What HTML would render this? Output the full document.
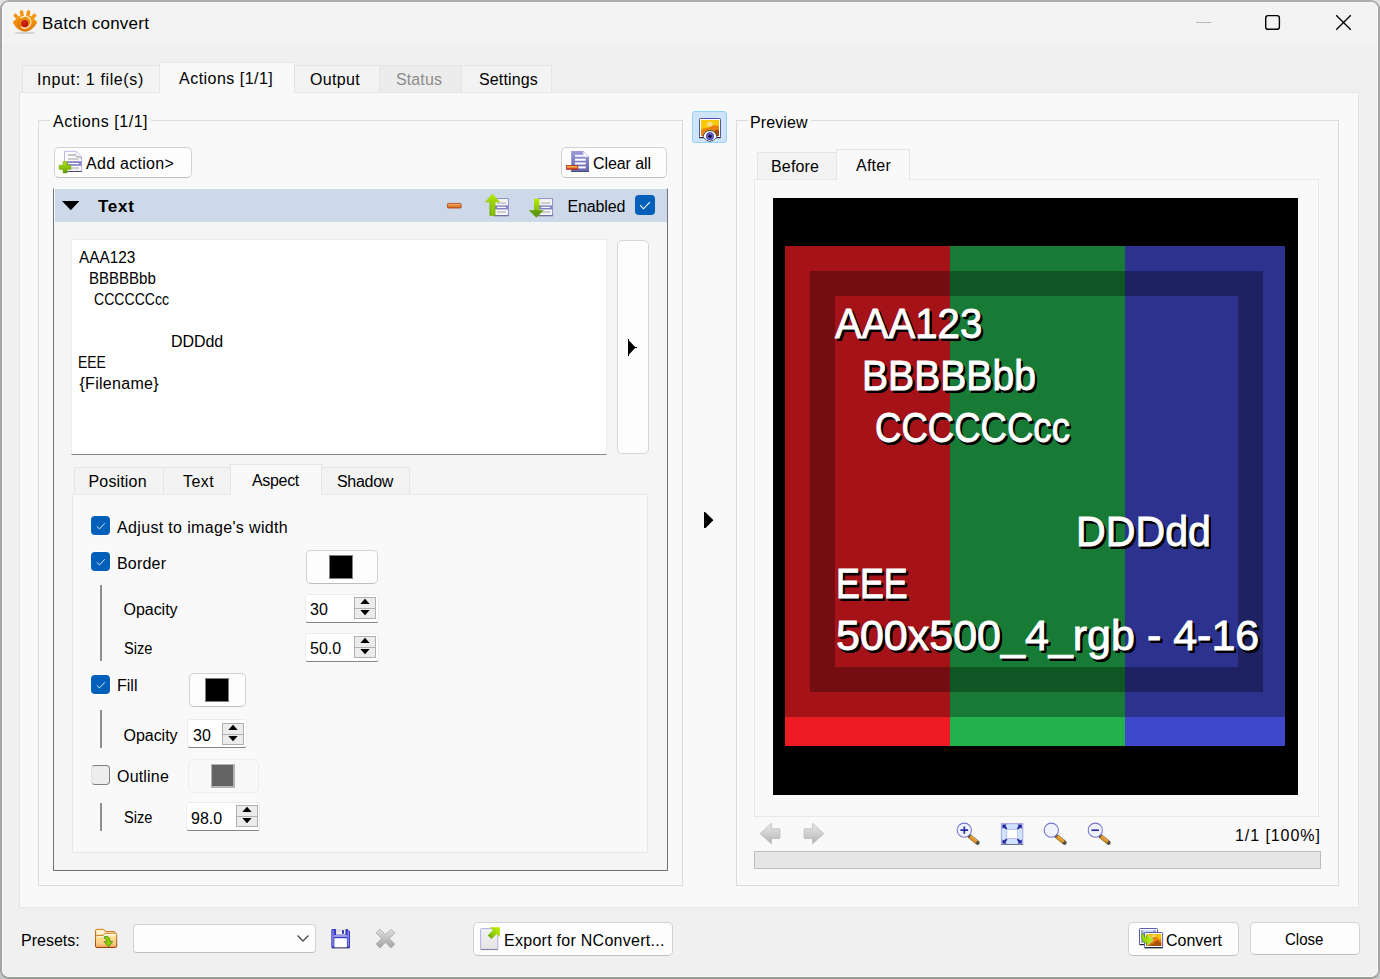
<!DOCTYPE html>
<html>
<head>
<meta charset="utf-8">
<title>Batch convert</title>
<style>
*{box-sizing:border-box;margin:0;padding:0}
html,body{width:1380px;height:979px;overflow:hidden;background:linear-gradient(#e3e2e1 0,#e3e2e1 50%,#c5c7c7 50%,#c5c7c7 100%)}
body{font-family:"Liberation Sans",sans-serif;font-size:16px;color:#000;position:relative}
.abs,.t,.box,.btn,.tab,.cb,.spin,.vl,svg{position:absolute}
.t{transform-origin:0 0;white-space:pre;line-height:20px;height:20px}
#win{position:absolute;left:0;top:0;width:1380px;height:979px;background:#f0f0f0;border:2px solid;border-color:#adadad #a6a6a6 #9b9d98 #a3a3a3;border-radius:9px;overflow:hidden}
#hl{position:absolute;left:2px;top:2px;width:1376px;height:975px;border:1px solid #f7f7f7;border-radius:7px;pointer-events:none}
#titlebar{position:absolute;left:0;top:0;width:1380px;height:45px;background:#f3f3f3}
.pane{position:absolute;background:#f9f9f9;border:1px solid #e5e5e5}
.tab{background:#f3f3f3;border:1px solid #e5e5e5;border-bottom:none}
.tab.sel{background:#f9f9f9}
.grp{position:absolute;border:1px solid #dcdcdc}
.grplabel{position:absolute;background:#f9f9f9;line-height:20px;height:20px;white-space:pre}
.btn{background:#fdfdfd;border:1px solid #d2d2d2;border-bottom-color:#bebebe;border-radius:5px}
.cb{width:19px;height:19px;border-radius:4px;background:#0060b9;box-shadow:0 0 0 1px rgba(255,255,255,0.75)}
.cb svg{left:0;top:0}
.cb.off{background:#ededed;border:1px solid #808080;border-left-color:#e0e0e0;box-shadow:none}
.spin{background:#fff;border:1px solid #ececec;border-bottom:1px solid #868686;border-radius:3px}
.sb{position:absolute;width:22px;height:22px;background:#ececec;border:1px solid #b0b0b0}
.sb:before{content:"";position:absolute;left:0;top:10px;width:20px;height:1px;background:#b0b0b0}
.sb svg{left:5px;top:0px}
.pt{transform-origin:0 0;position:absolute;white-space:pre;font-size:42.5px;line-height:50px;height:50px;margin-top:-40px;color:#fff;text-shadow:2px 2px 0 #000,2.7px 2.7px 0 #000,1.6px 2.7px 0 #000,2.7px 1.6px 0 #000;-webkit-text-stroke:0.9px #fff}
.vl{width:2px;background:#8f8f8f}
</style>
</head>
<body>
<div id="win"><div id="c" style="position:absolute;left:-2px;top:-2px;width:1380px;height:979px">
<div id="titlebar"></div>
<!--TITLE-->
<svg style="left:10px;top:7px" width="30" height="30" viewBox="10 7 30 30">
<defs><linearGradient id="og" x1="0" y1="0" x2="0" y2="1"><stop offset="0" stop-color="#f7a018"/><stop offset="0.55" stop-color="#ee8808"/><stop offset="1" stop-color="#e07c06"/></linearGradient>
<radialGradient id="rg" cx="0.4" cy="0.35" r="0.7"><stop offset="0" stop-color="#e02418"/><stop offset="1" stop-color="#a8100c"/></radialGradient></defs>
<ellipse cx="25" cy="32.9" rx="10.5" ry="1.2" fill="#000" opacity="0.13"/>
<g stroke-linecap="round" stroke-linejoin="round" fill="none">
<path d="M15.4 15.4L19.5 19.5M21.5 12L22.3 17M28.5 12L27.7 17M34.6 15.4L30.5 19.5" stroke-width="3.5" stroke="#f29410"/>
<path d="M14.5 22.4L20 17.5L30 17.5L35.5 22.4Q33.5 26 30 28.6Q25 32 20 28.6Q16.5 26 14.5 22.4Z" stroke-width="3" stroke="url(#og)" fill="url(#og)"/>
</g>
<circle cx="25" cy="22.4" r="5.4" fill="#ee8a0c"/>
<path d="M20.6 18.2A6 6 0 1 1 21.2 27" stroke="#fff" stroke-width="1.1" stroke-opacity="0.85" fill="none"/>
<path d="M19.3 26.2A7 7 0 0 1 19.8 18.4" stroke="#c47206" stroke-width="0.8" fill="none"/>
<circle cx="24.7" cy="23.5" r="3.5" fill="url(#rg)"/>
</svg>
<div class="t" id="title" style="left:42px;top:14px;font-size:17px;letter-spacing:0.25px">Batch convert</div>
<!--WINCTL-->
<div class="abs" style="left:1196px;top:22px;width:15px;height:1px;background:#b8b8b8"></div>
<svg style="left:1263px;top:13px" width="19" height="19" viewBox="0 0 19 19"><rect x="2.7" y="2.6" width="13.7" height="13.7" rx="2.4" fill="none" stroke="#000" stroke-width="1.4"/></svg>
<svg style="left:1334px;top:13px" width="19" height="19" viewBox="0 0 19 19"><path d="M2.2 2.2L16.8 16.8M16.8 2.2L2.2 16.8" fill="none" stroke="#000" stroke-width="1.35"/></svg>
<!--MAINTABS-->
<div class="pane" style="left:19px;top:92px;width:1340px;height:816px"></div>
<div class="tab" style="left:22px;top:65px;width:138px;height:27px"></div>
<div class="tab" style="left:294px;top:65px;width:86px;height:27px"></div>
<div class="tab" style="left:379px;top:65px;width:83px;height:27px;background:#ececec"></div>
<div class="tab" style="left:461px;top:65px;width:91px;height:27px"></div>
<div class="tab sel" style="left:159px;top:62px;width:136px;height:31px"></div>
<div class="t" style="left:37px;top:70px;letter-spacing:0.62px">Input: 1 file(s)</div>
<div class="t" style="left:179px;top:69px;letter-spacing:0.48px">Actions [1/1]</div>
<div class="t" style="left:310px;top:70px;letter-spacing:0.33px">Output</div>
<div class="t" style="left:396px;top:70px;letter-spacing:0.11px;color:#8c8c8c">Status</div>
<div class="t" style="left:479px;top:70px;letter-spacing:0.15px">Settings</div>
<!--LEFTGROUP-->
<div class="grp" style="left:38px;top:120px;width:645px;height:766px"></div>
<div class="grplabel" style="left:50px;top:112px;width:101px;padding-left:3px;letter-spacing:0.54px">Actions [1/1]</div>
<!--RIGHTGROUP-->
<div class="grp" style="left:736px;top:120px;width:603px;height:766px"></div>
<div class="grplabel" style="left:748px;top:113px;width:63px;padding-left:2px;letter-spacing:0.1px">Preview</div>
<!--LEFT-->
<div class="btn" style="left:54px;top:147px;width:138px;height:31px"></div>
<svg style="left:58px;top:149px" width="26" height="26" viewBox="58 149 26 26">
<defs><linearGradient id="gp" x1="0" y1="0" x2="0" y2="1"><stop offset="0" stop-color="#b4e000"/><stop offset="0.5" stop-color="#8cc400"/><stop offset="1" stop-color="#5c9800"/></linearGradient>
<linearGradient id="pg" x1="0" y1="0" x2="0" y2="1"><stop offset="0" stop-color="#9c9cd8"/><stop offset="1" stop-color="#6464ac"/></linearGradient></defs>
<path d="M64.5 151.3H76.3L81.6 156.8V171.3H64.5Z" fill="#fafafa" stroke="#b8b8ea" stroke-width="1"/>
<path d="M64.5 171.5H81.8" stroke="#50506c" stroke-width="1.1"/>
<path d="M76.3 151.5V156.9H81.5Z" fill="#fff" stroke="#c4c4ee" stroke-width="0.6"/>
<path d="M76.5 156.6Q79 156.3 81.3 158.2" stroke="#8c8c8c" stroke-width="0.9" fill="none"/>
<rect x="68" y="154" width="8.3" height="2" fill="#c8c8c8"/>
<rect x="68" y="158" width="10.5" height="2" fill="#cfcfcf"/>
<rect x="67" y="161.2" width="14.6" height="4.6" fill="#8484c8"/>
<rect x="68" y="163" width="10.8" height="1.1" fill="#fff"/>
<rect x="70" y="167" width="9" height="2.2" fill="#d0d0d0"/>
<path d="M63.1 161.6H67V165.3H70.8V169.3H67V173H63.1V169.3H59.2V165.3H63.1Z" fill="url(#gp)" stroke="#6ea800" stroke-width="0.6" stroke-linejoin="round"/>
</svg>
<div class="t" style="left:86px;top:154px;letter-spacing:0.28px">Add action&gt;</div>
<div class="btn" style="left:561px;top:147px;width:106px;height:31px"></div>
<svg style="left:565px;top:149px" width="26" height="26" viewBox="565 149 26 26">
<defs><linearGradient id="rm" x1="0" y1="0" x2="0" y2="1"><stop offset="0" stop-color="#f4c050"/><stop offset="0.45" stop-color="#ee9a3a"/><stop offset="1" stop-color="#c81818"/></linearGradient></defs>
<path d="M571.2 150.9H583L589 157V171.4H571.2Z" fill="url(#pg)"/>
<path d="M571.2 171.5H589" stroke="#4c4c74" stroke-width="1"/>
<path d="M583 150.9V157H589Z" fill="#fff" stroke="#b4b4e6" stroke-width="0.7"/>
<rect x="575" y="154.8" width="8.2" height="2" fill="#f4f4ff"/>
<rect x="575" y="158.7" width="10.8" height="2" fill="#fff"/>
<rect x="575" y="162.5" width="10.8" height="2" fill="#fff"/>
<rect x="577" y="166.4" width="8.8" height="2" fill="#fff"/>
<rect x="566.4" y="165.5" width="11.4" height="3.8" fill="url(#rm)" stroke="#a83020" stroke-width="0.8"/>
</svg>
<div class="t" style="left:593px;top:154px;letter-spacing:-0.08px">Clear all</div>
<!--panel-->
<div class="abs" style="left:53px;top:188px;width:615px;height:683px;background:#f5f5f5;border:1px solid #70727c;border-top:1px solid #fbfbfb"></div>
<div class="abs" style="left:54px;top:189px;width:1px;height:33px;background:#fbfbfb"></div><div class="abs" style="left:55px;top:189px;width:612px;height:33px;background:#cdd9e8"></div>
<svg style="left:61.7px;top:201px" width="17.6" height="9.2" viewBox="0 0 18 10" preserveAspectRatio="none"><path d="M0 0H18L9 10Z" fill="#000"/></svg>
<div class="t" style="left:98px;top:197px;font-weight:bold;font-size:17px;letter-spacing:0.7px">Text</div>
<svg style="left:444px;top:190px" width="112" height="30" viewBox="444 190 112 30">
<defs><linearGradient id="om" x1="0" y1="0" x2="0" y2="1"><stop offset="0" stop-color="#f6b468"/><stop offset="0.5" stop-color="#e88a3c"/><stop offset="1" stop-color="#cc5c1c"/></linearGradient>
<linearGradient id="ga" x1="0" y1="0" x2="0" y2="1"><stop offset="0" stop-color="#b8ec00"/><stop offset="0.5" stop-color="#8ec80c"/><stop offset="1" stop-color="#5e9a10"/></linearGradient>
<linearGradient id="gs" x1="0" y1="0" x2="1" y2="0"><stop offset="0" stop-color="#78b010"/><stop offset="0.5" stop-color="#a4dc08"/><stop offset="1" stop-color="#86c00c"/></linearGradient></defs>
<rect x="447.4" y="203.4" width="13.8" height="4.6" rx="1" fill="url(#om)" stroke="#a8401c" stroke-width="0.8"/>
<g><rect x="494" y="198.6" width="14.4" height="16.9" fill="#f4f4f4" stroke="#8888c4" stroke-width="0.9"/>
<rect x="497" y="202.3" width="9" height="1.6" fill="#c4c4c4"/><rect x="494.5" y="205.4" width="13.5" height="4" fill="#8080c4"/><rect x="497" y="206.8" width="9" height="1.1" fill="#fff"/><rect x="497" y="211.2" width="9" height="1.6" fill="#c4c4c4"/>
<path d="M494 215.8H508.8" stroke="#5a5a88" stroke-width="0.8"/></g>
<path d="M492.4 193.8L500.2 202.3H495.3V215.8H489.6V202.3H484.8Z" fill="url(#ga)"/>
<path d="M489.6 202.3H495.3V215.8H489.6Z" fill="url(#gs)" opacity="0.55"/>
<g transform="translate(44.2 0)"><rect x="494" y="198.6" width="14.4" height="16.9" fill="#f4f4f4" stroke="#8888c4" stroke-width="0.9"/>
<rect x="497" y="202.3" width="9" height="1.6" fill="#c4c4c4"/><rect x="494.5" y="205.4" width="13.5" height="4" fill="#8080c4"/><rect x="497" y="206.8" width="9" height="1.1" fill="#fff"/><rect x="497" y="211.2" width="9" height="1.6" fill="#c4c4c4"/>
<path d="M494 215.8H508.8" stroke="#5a5a88" stroke-width="0.8"/></g>
<path d="M534 198.8H539.4V210.2H543.6L536.4 217.5L529 210.2H534Z" fill="url(#ga)"/>
<path d="M529 210.2H543.6L536.4 217.5Z" fill="#5e9614" opacity="0.75"/>
</svg>
<div class="t" style="left:567.4px;top:197px;letter-spacing:-0.1px">Enabled</div>
<div class="cb" style="left:635px;top:195px;width:20px;height:20px;box-shadow:none"><svg width="20" height="20" viewBox="0 0 20 20"><path d="M5 10.2L8.5 13.8L14.9 7.1" fill="none" stroke="#fff" stroke-width="1.1"/></svg></div>
<!--textarea-->
<div class="abs" style="left:71px;top:239px;width:536px;height:216px;background:#fff;border:1px solid #ececec;border-bottom:1px solid #868686"></div>
<div class="t" style="left:78.5px;top:248px;transform:scaleX(0.96)">AAA123</div>
<div class="t" style="left:88.6px;top:269px;transform:scaleX(0.939)">BBBBBbb</div>
<div class="t" style="left:94.4px;top:290px;transform:scaleX(0.879)">CCCCCCcc</div>
<div class="t" style="left:171px;top:332px;letter-spacing:-0.09px">DDDdd</div>
<div class="t" style="left:78px;top:353px;transform:scaleX(0.871)">EEE</div>
<div class="t" style="left:79.5px;top:374px;letter-spacing:0.28px">{Filename}</div>
<div class="btn" style="left:617px;top:240px;width:32px;height:214px;border-color:#d6d6d6"></div>
<svg style="left:627.8px;top:338.8px" width="9.4" height="17.2" viewBox="0 0 9.4 17.2"><path d="M0 0H1V1.6L7.2 8.1H9.4V9.1H7.2L1 15.6V17.2H0Z" fill="#000"/></svg>
<!--inner tabs-->
<div class="pane" style="left:72px;top:494px;width:576px;height:359px;border-color:#e8e8e8"></div>
<div class="tab" style="left:74px;top:467px;width:90px;height:27px"></div>
<div class="tab" style="left:163px;top:467px;width:68px;height:27px"></div>
<div class="tab" style="left:321px;top:467px;width:89px;height:27px"></div>
<div class="tab sel" style="left:230px;top:464px;width:92px;height:31px"></div>
<div class="t" style="left:88.5px;top:472px;letter-spacing:0.16px">Position</div>
<div class="t" style="left:183px;top:472px;letter-spacing:0.41px">Text</div>
<div class="t" style="left:252px;top:471px;letter-spacing:-0.32px">Aspect</div>
<div class="t" style="left:337px;top:472px;letter-spacing:-0.3px">Shadow</div>
<!--controls-->
<div class="cb" style="left:91px;top:516px"><svg width="19" height="19" viewBox="0 0 19 19"><path d="M5.8 10.4L8.5 12.9L13.8 7.3" fill="none" stroke="#fff" stroke-width="0.9" stroke-opacity="0.95"/></svg></div>
<div class="t" style="left:117px;top:518px;letter-spacing:0.345px">Adjust to image's width</div>
<div class="cb" style="left:91px;top:552px"><svg width="19" height="19" viewBox="0 0 19 19"><path d="M5.8 10.4L8.5 12.9L13.8 7.3" fill="none" stroke="#fff" stroke-width="0.9" stroke-opacity="0.95"/></svg></div>
<div class="t" style="left:117px;top:554px;letter-spacing:0.2px">Border</div>
<div class="btn" style="left:306px;top:550px;width:72px;height:34px"></div>
<div class="abs" style="left:329px;top:555px;width:24px;height:24px;background:#000;border:1px solid #808080"></div>
<div class="vl" style="left:100px;top:585px;height:76px"></div>
<div class="t" style="left:123.5px;top:600px;letter-spacing:-0.03px">Opacity</div>
<div class="spin" style="left:305px;top:594px;width:74px;height:29px"></div>
<div class="sb" style="left:354px;top:597px"><svg width="10" height="18" viewBox="0 0 10 18"><path d="M0.3 6L5 0.8L9.7 6ZM0.3 12L5 17.2L9.7 12Z" fill="#000"/></svg></div>
<div class="t" style="left:310px;top:600px;">30</div>
<div class="t" style="left:123.7px;top:639px;transform:scaleX(0.913)">Size</div>
<div class="spin" style="left:305px;top:633px;width:74px;height:29px"></div>
<div class="sb" style="left:354px;top:636px"><svg width="10" height="18" viewBox="0 0 10 18"><path d="M0.3 6L5 0.8L9.7 6ZM0.3 12L5 17.2L9.7 12Z" fill="#000"/></svg></div>
<div class="t" style="left:310px;top:639px">50.0</div>
<div class="cb" style="left:91px;top:675px"><svg width="19" height="19" viewBox="0 0 19 19"><path d="M5.8 10.4L8.5 12.9L13.8 7.3" fill="none" stroke="#fff" stroke-width="0.9" stroke-opacity="0.95"/></svg></div>
<div class="t" style="left:117px;top:676px;">Fill</div>
<div class="btn" style="left:189px;top:673px;width:57px;height:34px"></div>
<div class="abs" style="left:205px;top:678px;width:24px;height:24px;background:#000;border:1px solid #808080"></div>
<div class="vl" style="left:100px;top:710px;height:38px"></div>
<div class="t" style="left:123.5px;top:726px;letter-spacing:-0.03px">Opacity</div>
<div class="spin" style="left:187px;top:719px;width:60px;height:29px"></div>
<div class="sb" style="left:222px;top:723px"><svg width="10" height="18" viewBox="0 0 10 18"><path d="M0.3 6L5 0.8L9.7 6ZM0.3 12L5 17.2L9.7 12Z" fill="#000"/></svg></div>
<div class="t" style="left:193px;top:726px;">30</div>
<div class="cb off" style="left:91px;top:765px;height:20px"></div>
<div class="t" style="left:117px;top:767px;letter-spacing:0.19px">Outline</div>
<div class="btn" style="left:188px;top:759px;width:71px;height:34px;background:#f9f9f9;border-color:#ededed"></div>
<div class="abs" style="left:211px;top:764px;width:24px;height:24px;background:#646464;border:solid #b4b4b4;border-width:1px 2px 2px 1px"></div>
<div class="vl" style="left:100px;top:803px;height:28px"></div>
<div class="t" style="left:123.7px;top:808px;transform:scaleX(0.913)">Size</div>
<div class="spin" style="left:186px;top:802px;width:74px;height:29px"></div>
<div class="sb" style="left:236px;top:805px"><svg width="10" height="18" viewBox="0 0 10 18"><path d="M0.3 6L5 0.8L9.7 6ZM0.3 12L5 17.2L9.7 12Z" fill="#000"/></svg></div>
<div class="t" style="left:191px;top:809px">98.0</div>
<!--/LEFT-->
<!--RIGHT-->
<div class="abs" style="left:692px;top:111px;width:35px;height:32px;background:#cfe4fa;border:1px solid #90d2f8;border-radius:3px"></div>
<svg style="left:696px;top:115px" width="28" height="28" viewBox="696 115 28 28">
<rect x="699.5" y="118.5" width="21" height="19" rx="0.8" fill="#fff" stroke="#5454a4" stroke-width="1"/>
<path d="M699.2 137.7H720.8" stroke="#14142c" stroke-width="1"/>
<rect x="701" y="120" width="18" height="16" fill="#f8c800"/>
<circle cx="710" cy="124.3" r="2.9" fill="#fcdc84"/>
<path d="M701 130Q703 128 706 128.3L711.5 126.3Q713.5 124.6 716 125.6L719 126V136H701Z" fill="#e8800c"/>
<path d="M714 131.5Q716.5 128.6 719 130.5V136H715Z" fill="#a04c08"/>
<path d="M701 133Q704 130.5 708 131L712 133V136H701Z" fill="#ec8a10" opacity="0.6"/>
<path d="M703 137Q704.4 130.6 710 130.6Q715.6 130.6 717 137Q713.4 141.4 710 141.4Q706.6 141.4 703 137Z" fill="#fff" stroke="#3c3c44" stroke-width="0.9"/>
<circle cx="710" cy="136.2" r="3.7" fill="#6464d0" stroke="#3838a0" stroke-width="0.8"/>
<circle cx="710" cy="136.2" r="1.7" fill="#1c0c38"/>
</svg>
<svg style="left:703.9px;top:511.8px" width="9.4" height="16.4" viewBox="0 0 9.4 16.4"><path d="M0 0H1.2L9.4 8.2L1.2 16.4H0Z" fill="#000"/></svg>
<div class="pane" style="left:754px;top:179px;width:565px;height:638px;border-color:#e8e8e8"></div>
<div class="tab" style="left:757px;top:152px;width:80px;height:27px"></div>
<div class="tab sel" style="left:836px;top:149px;width:74px;height:31px"></div>
<div class="t" style="left:771px;top:157px;letter-spacing:0.17px">Before</div>
<div class="t" style="left:856px;top:156px;letter-spacing:0.24px">After</div>
<!--image-->
<div class="abs" style="left:773px;top:198px;width:525px;height:597px;background:#000"></div>
<div class="abs" style="left:785px;top:246px;width:165px;height:500px;background:#ed1c24"></div>
<div class="abs" style="left:950px;top:246px;width:175px;height:500px;background:#22b14c"></div>
<div class="abs" style="left:1125px;top:246px;width:160px;height:500px;background:#3f48cc"></div>
<div class="abs" style="left:785px;top:246px;width:500px;height:471px;background:rgba(0,0,0,0.3)"></div>
<div class="abs" style="left:810px;top:271px;width:453px;height:421px;border:25px solid rgba(0,0,0,0.3)"></div>
<div class="pt" style="left:835px;top:339px;transform:scaleX(0.944)">AAA123</div>
<div class="pt" style="left:861.5px;top:391px;transform:scaleX(0.92)">BBBBBbb</div>
<div class="pt" style="left:875px;top:443px;transform:scaleX(0.86)">CCCCCCcc</div>
<div class="pt" style="left:1075.5px;top:547px;transform:scaleX(0.968)">DDDdd</div>
<div class="pt" style="left:835.5px;top:599px;transform:scaleX(0.844)">EEE</div>
<div class="pt" style="left:836px;top:651px;transform:scaleX(1.012)">500x500_4_rgb - 4-16</div>
<!--toolbar-->
<svg style="left:756px;top:819px" width="360" height="30" viewBox="756 819 360 30">
<defs><linearGradient id="ar" x1="0" y1="0" x2="0" y2="1"><stop offset="0" stop-color="#ececec"/><stop offset="0.5" stop-color="#cfcfcf"/><stop offset="1" stop-color="#b4b4b4"/></linearGradient>
<linearGradient id="hd" x1="0" y1="0" x2="1" y2="1"><stop offset="0" stop-color="#f4b848"/><stop offset="1" stop-color="#d07a10"/></linearGradient>
</defs>
<path d="M760.2 833.5L771.4 823.3V828.8H779.3Q779.9 828.8 779.9 829.4V837.9Q779.9 838.5 779.3 838.5H771.4V843.8Z" fill="url(#ar)" stroke="#b4b4b4" stroke-width="0.7"/>
<path d="M823.8 833.5L812.6 823.3V828.8H804.7Q804.1 828.8 804.1 829.4V837.9Q804.1 838.5 804.7 838.5H812.6V843.8Z" fill="url(#ar)" stroke="#b4b4b4" stroke-width="0.7"/>
<g transform="translate(964.3 830.2)"><path d="M5.4 6.2L13.2 12.4" stroke="#50503c" stroke-width="4.4" stroke-linecap="round"/><path d="M5.6 6.4L12.3 11.7" stroke="#e49424" stroke-width="3.3" stroke-linecap="butt"/><path d="M6.6 5.5L13 10.6" stroke="#f8cc70" stroke-width="1" opacity="0.8"/><path d="M6.9 4.9L13.6 10.2" stroke="#b03030" stroke-width="0.6" stroke-dasharray="1 0.8" opacity="0.7"/><circle cx="0" cy="0" r="7.1" fill="#f0f3fb" stroke="#7676cc" stroke-width="1.1"/></g>
<path d="M960.4 830.2H968.1M964.3 826.6V833.8" stroke="#2a2aa0" stroke-width="1.7"/>
<rect x="1001.4" y="823.6" width="21.4" height="20.8" fill="#d2e2fc" stroke="#a4a4e6" stroke-width="1"/>
<path d="M1001 844.5H1023.2" stroke="#74748a" stroke-width="1"/>
<rect x="1006.4" y="829.2" width="11.4" height="9.6" fill="#b8b8ec"/>
<rect x="1007.2" y="830" width="9.9" height="8" fill="#fff"/>
<ellipse cx="1012.1" cy="826.9" rx="5" ry="1.4" fill="#cfe4fe"/><ellipse cx="1012.1" cy="841.3" rx="5" ry="1.4" fill="#cfe4fe"/><ellipse cx="1004.2" cy="834.1" rx="1.6" ry="4.2" fill="#cfe4fe"/><ellipse cx="1020" cy="834.1" rx="1.6" ry="4.2" fill="#cfe4fe"/>
<path d="M1002.4 824.6H1006.6L1005.6 826.2L1007.4 828.4L1006.2 829.6L1004 827.8L1002.4 828.8ZM1021.8 824.6H1017.6L1018.6 826.2L1016.8 828.4L1018 829.6L1020.2 827.8L1021.8 828.8ZM1002.4 843.6H1006.6L1005.6 842L1007.4 839.8L1006.2 838.6L1004 840.4L1002.4 839.4ZM1021.8 843.6H1017.6L1018.6 842L1016.8 839.8L1018 838.6L1020.2 840.4L1021.8 839.4Z" fill="#2424a0"/>
<g transform="translate(1051.3 830.2)"><path d="M5.4 6.2L13.2 12.4" stroke="#50503c" stroke-width="4.4" stroke-linecap="round"/><path d="M5.6 6.4L12.3 11.7" stroke="#e49424" stroke-width="3.3" stroke-linecap="butt"/><path d="M6.6 5.5L13 10.6" stroke="#f8cc70" stroke-width="1" opacity="0.8"/><path d="M6.9 4.9L13.6 10.2" stroke="#b03030" stroke-width="0.6" stroke-dasharray="1 0.8" opacity="0.7"/><circle cx="0" cy="0" r="7.1" fill="#f0f3fb" stroke="#7676cc" stroke-width="1.1"/></g>
<g transform="translate(1095.3 830.2)"><path d="M5.4 6.2L13.2 12.4" stroke="#50503c" stroke-width="4.4" stroke-linecap="round"/><path d="M5.6 6.4L12.3 11.7" stroke="#e49424" stroke-width="3.3" stroke-linecap="butt"/><path d="M6.6 5.5L13 10.6" stroke="#f8cc70" stroke-width="1" opacity="0.8"/><path d="M6.9 4.9L13.6 10.2" stroke="#b03030" stroke-width="0.6" stroke-dasharray="1 0.8" opacity="0.7"/><circle cx="0" cy="0" r="7.1" fill="#f0f3fb" stroke="#7676cc" stroke-width="1.1"/></g>
<path d="M1091.5 830.2H1098.9" stroke="#2a2aa0" stroke-width="1.7"/>
</svg>
<div class="t" style="left:1235px;top:826px;letter-spacing:0.93px">1/1 [100%]</div>
<div class="abs" style="left:754px;top:851px;width:567px;height:18px;background:#e6e6e6;border:1px solid #bcbcbc"></div>
<!--/RIGHT-->
<!--BOTTOM-->
<div class="t" style="left:21px;top:931px;">Presets:</div>
<svg style="left:93px;top:925px" width="28" height="28" viewBox="93 925 28 28">
<defs><linearGradient id="fo" x1="0" y1="0" x2="0" y2="1"><stop offset="0" stop-color="#fff4cc"/><stop offset="0.35" stop-color="#fcd88c"/><stop offset="0.7" stop-color="#fad088"/><stop offset="1" stop-color="#f29c50"/></linearGradient>
<linearGradient id="fb" x1="0" y1="0" x2="0" y2="1"><stop offset="0" stop-color="#cc842c"/><stop offset="1" stop-color="#94400c"/></linearGradient></defs>
<path d="M95.5 946V930.6Q95.5 929.3 96.8 929.3H103Q104 929.3 104.6 930.1L105.6 931.5H114Q115.2 931.5 115.2 932.7V934" fill="#fcdc98" stroke="url(#fb)" stroke-width="1"/>
<path d="M97 930.6H103.2L104.8 932.8H113.6V934H97Z" fill="#fff8dc"/>
<path d="M95.5 946.2V936.8Q95.5 935.6 96.7 935.6H103L104.8 933.3H115.4Q116.7 933.3 116.7 934.5V946.2Q116.7 947.5 115.4 947.5H96.8Q95.5 947.5 95.5 946.2Z" fill="url(#fo)" stroke="url(#fb)" stroke-width="1"/>
<path d="M97.3 936.8H103.6L105.4 934.6H115.2" stroke="#fffce8" stroke-width="1.1" fill="none"/>
<path d="M104.4 936.6Q109.6 935.2 110.3 941.6H112.8L108.6 946.9L104.1 941.6H106.8Q106.9 938.6 104.4 938.4Z" fill="#92cc04" stroke="#2c8620" stroke-width="0.7" stroke-linejoin="round"/>
</svg>
<svg style="left:329px;top:926px" width="70" height="26" viewBox="329 926 70 26">
<defs><linearGradient id="xg" x1="0" y1="0" x2="0" y2="1"><stop offset="0" stop-color="#dedede"/><stop offset="1" stop-color="#a4a4a4"/></linearGradient></defs>
<path d="M331.3 930.2Q331.3 929 332.5 929H347.2L350 931.6V946.8Q350 948 348.8 948H332.5Q331.3 948 331.3 946.8Z" fill="#3a3ac4"/>
<path d="M332.3 930H333.6V946.5H332.3ZM347.6 931H348.9V946.5H347.6Z" fill="#a4a4ec" opacity="0.8"/>
<rect x="333.6" y="935.2" width="14" height="1.6" fill="#b4b4f0"/>
<rect x="336" y="929" width="9.4" height="5.6" fill="#f4f4f0"/>
<path d="M336 929H345.4V930.4H341L338.5 933.5H336Z" fill="#d4d4d0" opacity="0.7"/>
<rect x="342" y="930.2" width="1.9" height="3.6" fill="#2c2ca8"/>
<rect x="334.4" y="938.2" width="12.5" height="9.3" fill="#fff"/>
<path d="M331.8 948H349.6" stroke="#22223c" stroke-width="0.9" opacity="0.8"/>
<path d="M379.9 929L385.5 934.6L391.1 929L395 932.9L389.4 938.5L395 944.1L391.1 948L385.5 942.4L379.9 948L376 944.1L381.6 938.5L376 932.9Z" fill="url(#xg)" stroke="#a0a0a0" stroke-width="0.6"/>
</svg>
<div class="btn" style="left:133px;top:924px;width:183px;height:29px;border-radius:4px"></div>
<svg style="left:296px;top:934px" width="14" height="9" viewBox="0 0 14 9"><path d="M1.5 1.5L7 7L12.5 1.5" fill="none" stroke="#4a4a4a" stroke-width="1.3"/></svg>
<div class="btn" style="left:473px;top:922px;width:200px;height:34px"></div>
<svg style="left:477px;top:925px" width="26" height="27" viewBox="477 925 26 27">
<defs><linearGradient id="pgx" x1="0" y1="0" x2="0" y2="1"><stop offset="0" stop-color="#f2f2f2"/><stop offset="1" stop-color="#e4e4e4"/></linearGradient>
<linearGradient id="gx" x1="1" y1="0" x2="0" y2="1"><stop offset="0" stop-color="#c4f000"/><stop offset="0.5" stop-color="#98d404"/><stop offset="1" stop-color="#5c980c"/></linearGradient></defs>
<rect x="480.6" y="928.6" width="17.2" height="20.8" rx="0.9" fill="url(#pgx)" stroke="#b0b0e6" stroke-width="1"/>
<path d="M480.6 949.6H498" stroke="#80809c" stroke-width="1"/>
<path d="M490 927.2H499.9V937L496.8 934L491.4 939.1L487.8 935.2L493 930.3Z" fill="url(#gx)"/>
</svg>
<div class="t" style="left:504px;top:931px;letter-spacing:0.27px">Export for NConvert...</div>
<div class="btn" style="left:1128px;top:922px;width:111px;height:34px"></div>
<svg style="left:1137px;top:926px" width="28" height="24" viewBox="1137 926 28 24">
<rect x="1139.5" y="928.5" width="18" height="16" rx="0.8" fill="#fff" stroke="#5c5caa" stroke-width="1"/>
<rect x="1141" y="930" width="15" height="13" fill="#a4a4e2"/>
<rect x="1143" y="930" width="10" height="2" fill="#c8e0ff"/>
<path d="M1139.5 944.7H1145" stroke="#101020" stroke-width="1"/>
<rect x="1144.6" y="932.5" width="18" height="15" rx="0.8" fill="#fff" stroke="#5c5caa" stroke-width="1"/>
<path d="M1144.4 947.8H1162.8" stroke="#101020" stroke-width="1.1"/>
<rect x="1146.1" y="934" width="15.1" height="11.9" fill="#f8c000"/>
<circle cx="1154" cy="936.4" r="1.8" fill="#fcdc88"/>
<path d="M1146.1 940L1150 939L1155 936.8L1157 937.4L1159 939.4L1161.2 938.6V945.9H1146.1Z" fill="#e88410"/>
<path d="M1150 945.9L1156 941L1158 940L1160 942.4L1161.2 942V945.9Z" fill="#a85408"/>
<path d="M1146.1 943.4L1153 943.4L1150 945.9H1146.1Z" fill="#c06808"/>
<path d="M1141.5 934.4Q1141.6 933.2 1143 933.6Q1144.2 937.8 1147.2 937.6V934.2L1153.2 939.8L1147.2 945.7V943Q1141.2 943.4 1141.5 934.4Z" fill="#9cd808" stroke="#3c8c28" stroke-width="0.6" stroke-linejoin="round"/>
<path d="M1147.2 934.2L1153.2 939.8L1147.2 945.7Z" fill="#b4ec08" opacity="0.7"/>
<path d="M1147.2 934.2L1153.2 939.8L1147.2 945.7" fill="none" stroke="#fff" stroke-width="0.7" opacity="0.8"/>
</svg>
<div class="t" style="left:1166px;top:931px">Convert</div>
<div class="btn" style="left:1250px;top:922px;width:110px;height:33px"></div>
<div class="t" style="left:1285px;top:930px;transform:scaleX(0.941)">Close</div>
<!--/BOTTOM-->
<div id="hl"></div>
</div></div>
</body>
</html>
